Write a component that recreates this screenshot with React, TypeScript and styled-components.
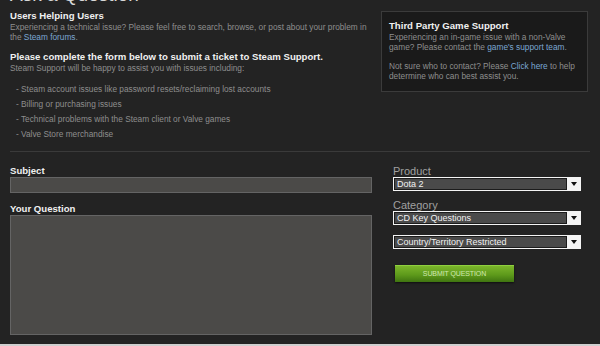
import styled, { createGlobalStyle } from 'styled-components';

const GlobalStyle = createGlobalStyle`
  html, body {
    margin: 0;
    padding: 0;
    background: #232323;
    overflow: hidden;
  }
  body {
    font-family: "Liberation Sans", Arial, sans-serif;
  }
`;

const issues = [
  'Steam account issues like password resets/reclaiming lost accounts',
  'Billing or purchasing issues',
  'Technical problems with the Steam client or Valve games',
  'Valve Store merchandise',
];

function Select({ value }: { value: string }) {
  return (
    <SelectBox>
      <SelectValue>{value}</SelectValue>
      <SelectArrow>
        <svg width="6" height="4" viewBox="0 0 6 4">
          <path d="M0 0 H6 L3 4 Z" fill="#111" />
        </svg>
      </SelectArrow>
    </SelectBox>
  );
}

export default function App() {
  return (
    <>
      <GlobalStyle />
      <Page>
        <PageTitle>Ask a Question</PageTitle>
        <Top>
          <Intro>
            <Heading>Users Helping Users</Heading>
            <Text>
              Experiencing a technical issue? Please feel free to search, browse, or post about your problem in the{' '}
              <Link>Steam forums</Link>.
            </Text>
            <Heading $gap={9}>Please complete the form below to submit a ticket to Steam Support.</Heading>
            <Text>Steam Support will be happy to assist you with issues including:</Text>
            <IssueList>
              {issues.map((i) => (
                <li key={i}>- {i}</li>
              ))}
            </IssueList>
          </Intro>
          <SideBox>
            <Heading>Third Party Game Support</Heading>
            <Text>
              Experiencing an in-game issue with a non-Valve game? Please contact the{' '}
              <Link>game's support team</Link>.
            </Text>
            <Text $gap={9}>
              Not sure who to contact? Please <Link>Click here</Link> to help determine who can best assist you.
            </Text>
          </SideBox>
        </Top>
        <Rule />
        <Form>
          <MainFields>
            <FieldLabel>Subject</FieldLabel>
            <Input />
            <FieldLabel $gap={10}>Your Question</FieldLabel>
            <TextArea />
          </MainFields>
          <SideFields>
            <SelectLabel>Product</SelectLabel>
            <Select value="Dota 2" />
            <SelectLabel $gap={8}>Category</SelectLabel>
            <Select value="CD Key Questions" />
            <Spacer />
            <Select value="Country/Territory Restricted" />
            <SubmitButton>SUBMIT QUESTION</SubmitButton>
          </SideFields>
        </Form>
      </Page>
      <BottomStrip />
    </>
  );
}

const Page = styled.div`
  height: 344px;
  padding: 0 10px 0 10px;
  box-sizing: border-box;
  color: #909090;
  overflow: hidden;
`;

const PageTitle = styled.h1`
  margin: -15px 0 0 0;
  font-size: 19px;
  line-height: 20px;
  font-weight: normal;
  color: #d8d8d8;
`;

const Top = styled.div`
  display: flex;
  justify-content: space-between;
  align-items: flex-start;
  margin-top: 5px;
`;

const Intro = styled.div`
  width: 362px;
`;

const Heading = styled.div<{ $gap?: number }>`
  margin-top: ${(p) => p.$gap ?? 0}px;
  font-size: 9.6px;
  line-height: 12px;
  font-weight: bold;
  color: #f0f0f0;
  white-space: nowrap;
`;

const Text = styled.div<{ $gap?: number }>`
  margin-top: ${(p) => p.$gap ?? 0}px;
  font-size: 8.3px;
  line-height: 10px;
  color: #8e8e8e;
`;

const Link = styled.span`
  color: #7ba7d3;
`;

const IssueList = styled.ul`
  list-style: none;
  margin: 9px 0 0 0;
  padding: 0 0 0 6px;
  font-size: 8.3px;
  line-height: 15px;
  color: #8e8e8e;
  white-space: nowrap;
`;

const SideBox = styled.div`
  width: 207px;
  margin: 1px 2px 0 0;
  box-sizing: border-box;
  padding: 8px 7px 10px 7px;
  background: #1a1a1a;
  border: 1px solid #3b3b3b;
`;

const Rule = styled.div`
  margin-top: 9px;
  height: 1px;
  background: #3a3a3a;
`;

const Form = styled.div`
  display: flex;
  margin-top: 13px;
`;

const MainFields = styled.div`
  width: 362px;
  display: flex;
  flex-direction: column;
`;

const FieldLabel = styled.div<{ $gap?: number }>`
  margin-top: ${(p) => p.$gap ?? 0}px;
  font-size: 9.6px;
  line-height: 12px;
  font-weight: bold;
  color: #f0f0f0;
`;

const Input = styled.div`
  height: 16px;
  box-sizing: border-box;
  background: #4b4a48;
  border: 1px solid #646464;
`;

const TextArea = styled.div`
  height: 120px;
  box-sizing: border-box;
  background: #4b4a48;
  border: 1px solid #646464;
`;

const SideFields = styled.div`
  margin-left: 21px;
  width: 188px;
  display: flex;
  flex-direction: column;
`;

const SelectLabel = styled.div<{ $gap?: number }>`
  margin-top: ${(p) => p.$gap ?? 0}px;
  font-size: 11px;
  line-height: 12px;
  color: #a0a0a0;
`;

const SelectBox = styled.div`
  height: 14px;
  box-sizing: border-box;
  display: flex;
  background: #f4f4f4;
  border: 1px solid #f4f4f4;
`;

const SelectValue = styled.div`
  flex: 1;
  background: #4a4a4a;
  border: 1px solid #1c1c1c;
  color: #f2f2f2;
  font-size: 9px;
  line-height: 10px;
  padding-left: 2px;
  white-space: nowrap;
`;

const SelectArrow = styled.div`
  width: 13px;
  display: flex;
  align-items: center;
  justify-content: center;
`;

const Spacer = styled.div`
  height: 10px;
`;

const SubmitButton = styled.div`
  margin: 16px 0 0 2px;
  width: 119px;
  height: 17px;
  box-sizing: border-box;
  border-top: 1px solid #8fd03e;
  background: linear-gradient(to bottom, #7bb52b 0%, #5e9a1b 55%, #3f7410 100%);
  box-shadow: 0 1px 2px rgba(0, 0, 0, 0.6);
  color: #cfe8b0;
  font-size: 7px;
  line-height: 15px;
  text-align: center;
  letter-spacing: -0.1px;
`;

const BottomStrip = styled.div`
  height: 2px;
  background: #cfcfcf;
`;
